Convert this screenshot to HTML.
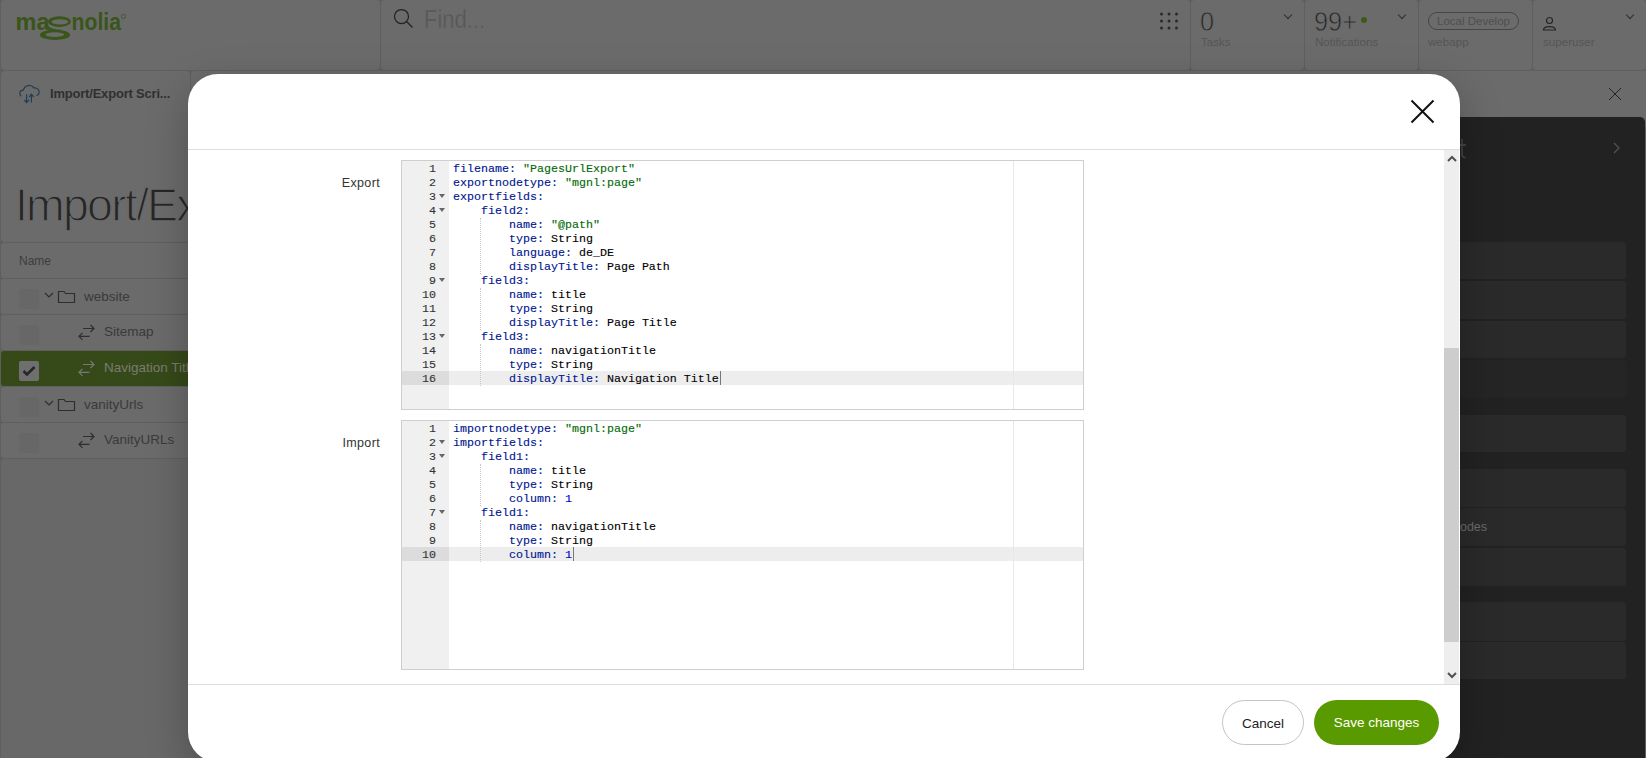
<!DOCTYPE html>
<html><head><meta charset="utf-8">
<style>
*{box-sizing:border-box;margin:0;padding:0}
html,body{width:1646px;height:758px;overflow:hidden}
body{position:relative;background:#5f5f5f;font-family:"Liberation Sans",sans-serif}
.abs{position:absolute}
.pnl{position:absolute;background:#6b6b6b;border-radius:4px}
/* top bar */
#logo{left:15px;top:10px;color:#3d6118;font-weight:bold;font-size:25px;letter-spacing:-0.5px}
.find{left:424px;top:3.5px;font-size:26.5px;color:#555;transform:scaleX(0.83);transform-origin:0 0;-webkit-text-stroke:0.6px #6b6b6b}
.big{font-size:27.5px;color:#262626;transform:scaleX(0.92);transform-origin:0 0;-webkit-text-stroke:0.8px #6b6b6b}
.sub{font-size:11.6px;color:#555}
.chev{width:6px;height:6px;border-right:1.3px solid #2e2e2e;border-bottom:1.3px solid #2e2e2e;transform:rotate(45deg)}
/* left list */
.title{left:15px;top:178px;font-size:46.5px;color:#262626;letter-spacing:-1.8px;font-weight:normal;-webkit-text-stroke:1.3px #6b6b6b}
.row{position:absolute;left:1px;width:200px;height:35px;background:#6b6b6b;border-radius:3px}
.cb{position:absolute;left:19px;width:20px;height:20px;background:#676767;border-radius:2px}
.rtxt{position:absolute;font-size:13.5px;color:#3a3a3a}
/* right dark */
#dark{left:1400px;top:117px;width:245px;height:700px;background:#222;border-radius:0 5px 0 0}
.drow{position:absolute;left:1400px;width:226px;background:#2a2a2a;border-radius:3px}
/* modal */
#modal{left:188px;top:74px;width:1272px;height:688px;background:#fff;border-radius:30px;box-shadow:0 14px 40px rgba(0,0,0,0.25);overflow:hidden}
#mhead{position:absolute;left:0;top:0;width:1272px;height:76px;border-bottom:1px solid #ddd}
#mfoot{position:absolute;left:0;top:610px;width:1272px;border-top:1px solid #ddd}
.btn{position:absolute;top:626px;height:45px;border-radius:23px;font-size:13.5px;text-align:center;line-height:45px}
.lbl{position:absolute;font-size:12.5px;color:#333;text-align:right;width:80px;letter-spacing:0.35px}
/* editor */
.ed{position:absolute;left:213px;width:683px;height:250px;border:1px solid #cfcfcf;background:#fff;overflow:hidden}
.gut{position:absolute;left:0;top:0;width:47px;height:100%;background:#f0f0f0}
.pm{position:absolute;left:611px;top:0;width:1px;height:100%;background:#e8e8e8}
.ln{position:absolute;left:0;margin-top:1px;height:14px;-webkit-text-stroke:0.12px #333;width:34px;text-align:right;font-family:"Liberation Mono",monospace;font-size:11.67px;line-height:14px;color:#333}
.act{position:absolute;left:47px;width:640px;height:14px;background:#ededed}
.actg{position:absolute;left:0;width:47px;height:14px;background:#dcdcdc}
.code{position:absolute;left:51px;top:1px;-webkit-text-stroke:0.12px currentColor;font-family:"Liberation Mono",monospace;font-size:11.67px;line-height:14px;color:#000;white-space:pre}
.k{color:#00168e}.s{color:#036a07}.n{color:#0000cd}
.fold{position:absolute;left:37px;width:0;height:0;border-left:3px solid transparent;border-right:3px solid transparent;border-top:4px solid #666}
.ig{position:absolute;left:78px;margin-top:1px;width:1px;border-left:1px dotted #c8c8c8}
.cur{position:absolute;width:1px;height:14px;background:#777}
</style></head><body>
<!-- top bar panels -->
<div class="pnl" style="left:1px;top:0;width:379px;height:70px"></div>
<div class="pnl" style="left:381px;top:0;width:809px;height:70px"></div>
<div class="pnl" style="left:1191px;top:0;width:113px;height:70px"></div>
<div class="pnl" style="left:1305px;top:0;width:113px;height:70px"></div>
<div class="pnl" style="left:1419px;top:0;width:113px;height:70px"></div>
<div class="pnl" style="left:1533px;top:0;width:113px;height:70px"></div>
<svg class="abs" style="left:0;top:0" width="140" height="50" viewBox="0 0 140 50">
<g fill="#3a5519">
<text x="15.5" y="29.8" font-family="Liberation Sans" font-weight="bold" font-size="24" textLength="34" lengthAdjust="spacingAndGlyphs">ma</text>
<text x="71.5" y="29.8" font-family="Liberation Sans" font-weight="bold" font-size="24" textLength="49.5" lengthAdjust="spacingAndGlyphs">nolia</text>
<path fill-rule="evenodd" d="M47.9 21.6 A11.5 5.3 0 1 0 70.9 21.6 A11.5 5.3 0 1 0 47.9 21.6 Z M51.599999999999994 21.9 A8.3 2.7 0 1 0 68.2 21.9 A8.3 2.7 0 1 0 51.599999999999994 21.9 Z M39.9 34.9 A15.1 5.1 0 1 0 70.1 34.9 A15.1 5.1 0 1 0 39.9 34.9 Z M45.4 34.6 A9.4 2.4 0 1 0 64.2 34.6 A9.4 2.4 0 1 0 45.4 34.6 Z "/>
<path d="M48 25.5 Q50 29.5 61 29.8 L60 31.5 Q49 31 46.5 27 Z"/>
</g>
<circle cx="123.4" cy="16.4" r="2.1" fill="none" stroke="#3a5519" stroke-width="0.8"/>
</svg>

<svg class="abs" style="left:390px;top:6px" width="26" height="26" viewBox="0 0 26 26"><circle cx="11.5" cy="10.5" r="7" fill="none" stroke="#222" stroke-width="1.25"/><line x1="16.5" y1="15.5" x2="22.5" y2="21.5" stroke="#222" stroke-width="1.25"/></svg>
<div class="abs find">Find...</div>
<svg class="abs" style="left:1158px;top:11px" width="22" height="20"><g fill="#2a2a2a"><circle cx="3.5" cy="3" r="1.5"/><circle cx="11" cy="3" r="1.5"/><circle cx="18.5" cy="3" r="1.5"/><circle cx="3.5" cy="10" r="1.5"/><circle cx="11" cy="10" r="1.5"/><circle cx="18.5" cy="10" r="1.5"/><circle cx="3.5" cy="17" r="1.5"/><circle cx="11" cy="17" r="1.5"/><circle cx="18.5" cy="17" r="1.5"/></g></svg>
<div class="abs big" style="left:1200px;top:5.5px">0</div>
<div class="abs sub" style="left:1201px;top:35px">Tasks</div>
<div class="abs chev" style="left:1285px;top:12px"></div>
<div class="abs big" style="left:1314px;top:5.5px">99+</div>
<div class="abs" style="left:1361px;top:17px;width:6px;height:6px;border-radius:50%;background:#3a5c18"></div>
<div class="abs sub" style="left:1315px;top:35px">Notifications</div>
<div class="abs chev" style="left:1399px;top:12px"></div>
<div class="abs" style="left:1428px;top:12px;width:91px;height:18px;border:1px solid #464646;border-radius:9px;font-size:11.5px;color:#4f4f4f;text-align:center;line-height:16px">Local Develop</div>
<div class="abs sub" style="left:1428px;top:35px">webapp</div>
<svg class="abs" style="left:1542px;top:16px" width="16" height="16"><circle cx="7.5" cy="4.5" r="3" fill="none" stroke="#262626" stroke-width="1.2"/><path d="M1.5 14 C1.5 9.5 13.5 9.5 13.5 14 Z" fill="none" stroke="#262626" stroke-width="1.2"/></svg>
<div class="abs sub" style="left:1543px;top:35px">superuser</div>
<div class="abs chev" style="left:1627px;top:12px"></div>

<!-- second row -->
<div class="pnl" style="left:1px;top:71px;width:189px;height:171px"></div>
<div class="pnl" style="left:191px;top:71px;width:1455px;height:56px;border-radius:4px 0 0 0"></div>
<svg class="abs" style="left:14px;top:80px" width="30" height="28" viewBox="0 0 30 28"><path d="M7.3 16.2 C5 14.5 5 10.5 9.3 10.2 C10.5 5.5 17 3.5 19.8 7.8 C23.5 7.5 26 10.5 25 13.5 C24.7 14.5 24 15.2 22.5 15.5 M12.6 14.2 V22.5 M10.3 20 L12.6 22.5 L14.9 20 M17.4 22.5 V14.2 M15.1 17 L17.4 14.2 L19.7 17" fill="none" stroke="#1f3f57" stroke-width="1.2"/></svg>
<div class="abs" style="left:50px;top:86px;font-size:13px;font-weight:bold;color:#303030;letter-spacing:-0.2px">Import/Export Scri...</div>
<svg class="abs" style="left:1608px;top:87px" width="14" height="14"><path d="M1 1 L13 13 M13 1 L1 13" stroke="#222" stroke-width="1"/></svg>
<div class="abs title">Import/Ex</div>

<div class="row" style="top:243px;height:35px"></div>
<div class="abs" style="left:19px;top:254px;font-size:12px;color:#3d3d3d">Name</div>
<div class="row" style="top:279px"></div>
<div class="cb" style="top:289px"></div>
<svg class="abs" style="left:44px;top:288px" width="34" height="16"><path d="M1 5 L5 9 L9 5" fill="none" stroke="#2e2e2e" stroke-width="1.2"/><path d="M14.5 3.5 H20 L21.5 5.5 H30.5 V14.5 H14.5 Z" fill="none" stroke="#2e2e2e" stroke-width="1.2"/></svg>
<div class="rtxt" style="left:84px;top:289px">website</div>
<div class="row" style="top:315px"></div>
<div class="cb" style="top:325px"></div>
<svg class="abs" style="left:78px;top:324px" width="17" height="17"><path d="M5 4.5 H16 M12.5 1 L16 4.5 L12.5 8 M11.5 12.3 H1 M4.5 8.8 L1 12.3 L4.5 15.8" fill="none" stroke="#2e2e2e" stroke-width="1.2"/></svg>
<div class="rtxt" style="left:104px;top:324px">Sitemap</div>
<div class="row" style="top:351px;background:#364a19"></div>
<div class="cb" style="top:361px;background:#6f6f6f"></div>
<svg class="abs" style="left:21px;top:364px" width="16" height="14"><path d="M2.5 7 L6 10.5 L13.5 3" fill="none" stroke="#262626" stroke-width="2.6"/></svg>
<svg class="abs" style="left:78px;top:360px" width="17" height="17"><path d="M5 4.5 H16 M12.5 1 L16 4.5 L12.5 8 M11.5 12.3 H1 M4.5 8.8 L1 12.3 L4.5 15.8" fill="none" stroke="#777" stroke-width="1.2"/></svg>
<div class="rtxt" style="left:104px;top:360px;color:#7b7b70">Navigation Title</div>
<div class="row" style="top:387px"></div>
<div class="cb" style="top:397px"></div>
<svg class="abs" style="left:44px;top:396px" width="34" height="16"><path d="M1 5 L5 9 L9 5" fill="none" stroke="#2e2e2e" stroke-width="1.2"/><path d="M14.5 3.5 H20 L21.5 5.5 H30.5 V14.5 H14.5 Z" fill="none" stroke="#2e2e2e" stroke-width="1.2"/></svg>
<div class="rtxt" style="left:84px;top:397px">vanityUrls</div>
<div class="row" style="top:423px"></div>
<div class="cb" style="top:433px"></div>
<svg class="abs" style="left:78px;top:432px" width="17" height="17"><path d="M5 4.5 H16 M12.5 1 L16 4.5 L12.5 8 M11.5 12.3 H1 M4.5 8.8 L1 12.3 L4.5 15.8" fill="none" stroke="#2e2e2e" stroke-width="1.2"/></svg>
<div class="rtxt" style="left:104px;top:432px">VanityURLs</div>
<div class="pnl" style="left:1px;top:459px;width:200px;height:320px;background:#686868"></div>

<!-- right dark panel -->
<div id="dark" class="abs"></div>
<svg class="abs" style="left:1450px;top:136px" width="20" height="24"><path d="M12 3 V18.5 Q12 21.5 15.5 21.5 M7 9 H16" fill="none" stroke="#4d4d4d" stroke-width="1.3"/></svg>
<svg class="abs" style="left:1612px;top:142px" width="10" height="12"><path d="M2 1 L7 6 L2 11" fill="none" stroke="#555" stroke-width="1.2"/></svg>
<div class="drow" style="top:242px;height:37px"></div>
<div class="drow" style="top:281px;height:38px"></div>
<div class="drow" style="top:321px;height:37px"></div>
<div class="drow" style="top:360px;height:38px;background:#252525"></div>
<div class="drow" style="top:415px;height:37px"></div>
<div class="drow" style="top:469px;height:38px"></div>
<div class="drow" style="top:508px;height:38px"></div>
<div class="abs" style="left:1453px;top:520px;font-size:12.5px;color:#6a6a6a">nodes</div>
<div class="drow" style="top:548px;height:38px"></div>
<div class="drow" style="top:602px;height:39px"></div>
<div class="drow" style="top:642px;height:37px"></div>

<!-- modal -->
<div id="modal" class="abs">
  <div id="mhead"></div>
  <svg class="abs" style="left:1222px;top:25px" width="25" height="25"><path d="M1.5 1.5 L23.5 23.5 M23.5 1.5 L1.5 23.5" stroke="#111" stroke-width="2"/></svg>
  <!-- scrollbar -->
  <div class="abs" style="left:1256px;top:76px;width:15px;height:534px;background:#eee"></div>
  <div class="abs" style="left:1256px;top:274px;width:15px;height:294px;background:#cdcdcd"></div>
  <svg class="abs" style="left:1258px;top:80px" width="12" height="10"><path d="M2 7 L6 3 L10 7" fill="none" stroke="#505050" stroke-width="2"/></svg>
  <svg class="abs" style="left:1258px;top:596px" width="12" height="10"><path d="M2 3 L6 7 L10 3" fill="none" stroke="#505050" stroke-width="2"/></svg>

  <div class="lbl" style="left:112px;top:102px">Export</div>
  <div class="ed" style="top:86px">
    <div class="gut"></div>
    <div class="actg" style="top:210px"></div>
    <div class="act" style="top:210px"></div>
    <div class="pm"></div>
    <div class="ln" style="top:0">1</div><div class="ln" style="top:14px">2</div><div class="ln" style="top:28px">3</div><div class="ln" style="top:42px">4</div><div class="ln" style="top:56px">5</div><div class="ln" style="top:70px">6</div><div class="ln" style="top:84px">7</div><div class="ln" style="top:98px">8</div><div class="ln" style="top:112px">9</div><div class="ln" style="top:126px">10</div><div class="ln" style="top:140px">11</div><div class="ln" style="top:154px">12</div><div class="ln" style="top:168px">13</div><div class="ln" style="top:182px">14</div><div class="ln" style="top:196px">15</div><div class="ln" style="top:210px">16</div>
    <div class="fold" style="top:33px"></div><div class="fold" style="top:47px"></div><div class="fold" style="top:117px"></div><div class="fold" style="top:173px"></div>
    <div class="ig" style="top:56px;height:56px"></div><div class="ig" style="top:126px;height:42px"></div><div class="ig" style="top:182px;height:42px"></div>
<div class="code"><span class="k">filename:</span> <span class="s">"PagesUrlExport"</span>
<span class="k">exportnodetype:</span> <span class="s">"mgnl:page"</span>
<span class="k">exportfields:</span>
    <span class="k">field2:</span>
        <span class="k">name:</span> <span class="s">"@path"</span>
        <span class="k">type:</span> String
        <span class="k">language:</span> de_DE
        <span class="k">displayTitle:</span> Page Path
    <span class="k">field3:</span>
        <span class="k">name:</span> title
        <span class="k">type:</span> String
        <span class="k">displayTitle:</span> Page Title
    <span class="k">field3:</span>
        <span class="k">name:</span> navigationTitle
        <span class="k">type:</span> String
        <span class="k">displayTitle:</span> Navigation Title</div>
    <div class="cur" style="left:318px;top:210px"></div>
  </div>

  <div class="lbl" style="left:112px;top:362px">Import</div>
  <div class="ed" style="top:346px">
    <div class="gut"></div>
    <div class="actg" style="top:126px"></div>
    <div class="act" style="top:126px"></div>
    <div class="pm"></div>
    <div class="ln" style="top:0">1</div><div class="ln" style="top:14px">2</div><div class="ln" style="top:28px">3</div><div class="ln" style="top:42px">4</div><div class="ln" style="top:56px">5</div><div class="ln" style="top:70px">6</div><div class="ln" style="top:84px">7</div><div class="ln" style="top:98px">8</div><div class="ln" style="top:112px">9</div><div class="ln" style="top:126px">10</div>
    <div class="fold" style="top:19px"></div><div class="fold" style="top:33px"></div><div class="fold" style="top:89px"></div>
    <div class="ig" style="top:42px;height:42px"></div><div class="ig" style="top:98px;height:42px"></div>
<div class="code"><span class="k">importnodetype:</span> <span class="s">"mgnl:page"</span>
<span class="k">importfields:</span>
    <span class="k">field1:</span>
        <span class="k">name:</span> title
        <span class="k">type:</span> String
        <span class="k">column:</span> <span class="n">1</span>
    <span class="k">field1:</span>
        <span class="k">name:</span> navigationTitle
        <span class="k">type:</span> String
        <span class="k">column:</span> <span class="n">1</span></div>
    <div class="cur" style="left:171px;top:126px"></div>
  </div>

  <div id="mfoot"></div>
  <div class="btn" style="left:1034px;width:82px;border:1px solid #c4c4c4;color:#222">Cancel</div>
  <div class="btn" style="left:1126px;width:125px;background:#599a00;color:#fff">Save changes</div>
</div>
</body></html>
